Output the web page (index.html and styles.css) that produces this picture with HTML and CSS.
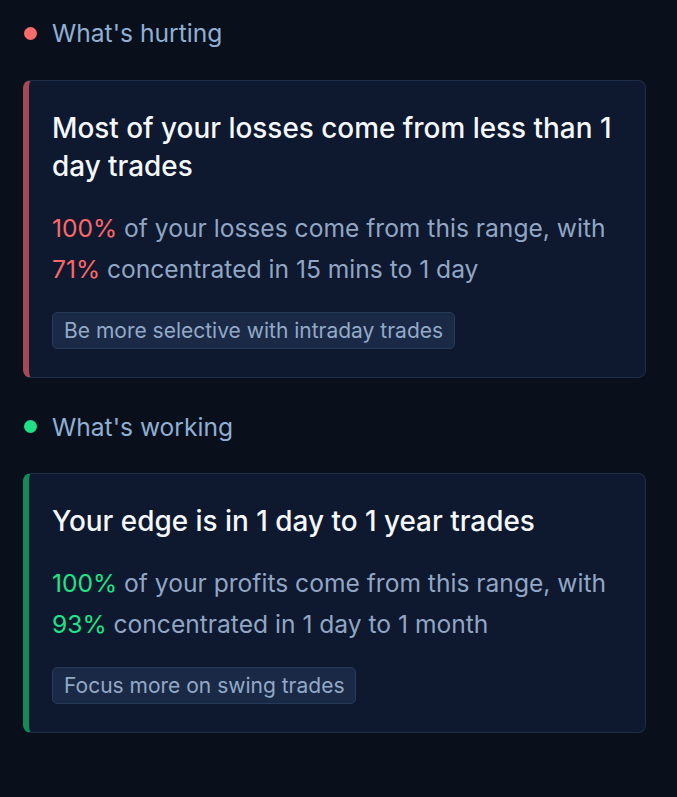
FILE: index.html
```html
<!DOCTYPE html>
<html>
<head>
<meta charset="utf-8">
<link rel="stylesheet" href="styles.css">
</head>
<body>
<div class="page">
  <section class="section">
    <div class="heading"><span class="dot dot-red"></span>What's hurting</div>
    <div class="card card-red">
      <div class="title">Most of your losses come from less than 1 day trades</div>
      <div class="body"><span class="pct-red">100%</span> of your losses come from this range, with <span class="pct-red">71%</span> concentrated in 15 mins to 1 day</div>
      <div class="chip">Be more selective with intraday trades</div>
    </div>
  </section>
  <section class="section">
    <div class="heading"><span class="dot dot-green"></span>What's working</div>
    <div class="card card-green">
      <div class="title">Your edge is in 1 day to 1 year trades</div>
      <div class="body"><span class="pct-green">100%</span> of your profits come from this range, with <span class="pct-green">93%</span> concentrated in 1 day to 1 month</div>
      <div class="chip">Focus more on swing trades</div>
    </div>
  </section>
</div>
</body>
</html>
```
FILE: styles.css
```css
html, body {
  margin: 0;
  padding: 0;
  background: #0a0f1c;
}
body {
  font-family: Inter, "Noto Sans", sans-serif;
  width: 677px;
  height: 797px;
  overflow: hidden;
}
.page {
  padding: 18px 31px 0 23px;
  display: flex;
  flex-direction: column;
  gap: 34px;
}
.section {
  display: flex;
  flex-direction: column;
  gap: 31.5px;
}
.heading {
  display: flex;
  align-items: center;
  gap: 15px;
  font-size: 24.6px;
  line-height: 30px;
  color: #8fb0d4;
  padding-left: 1px;
}
.dot {
  width: 13px;
  height: 13px;
  border-radius: 50%;
  flex: none;
}
.dot-red { background: #f76b6b; }
.dot-green { background: #1fe085; }
.card {
  background: #0e182e;
  border: 1px solid #1f2e48;
  border-left-width: 6px;
  border-radius: 8px;
  padding: 28px 24px 28px 23px;
  display: flex;
  flex-direction: column;
  align-items: flex-start;
}
.card-red { border-left-color: #a24b55; }
.card-green { border-left-color: #148a5a; }
.title {
  font-size: 27.9px;
  line-height: 38px;
  color: #f4f7fb;
  font-weight: 500;
}
.body {
  margin-top: 23px;
  font-size: 24.6px;
  line-height: 41px;
  color: #91a6c4;
}
.pct-red { color: #fc6868; }
.pct-green { color: #1fe487; }
.chip {
  margin-top: 22px;
  background: #1a2946;
  border: 1px solid #263a5a;
  border-radius: 5px;
  padding: 0 11px;
  font-size: 21px;
  line-height: 35px;
  color: #93a9c8;
}
```
